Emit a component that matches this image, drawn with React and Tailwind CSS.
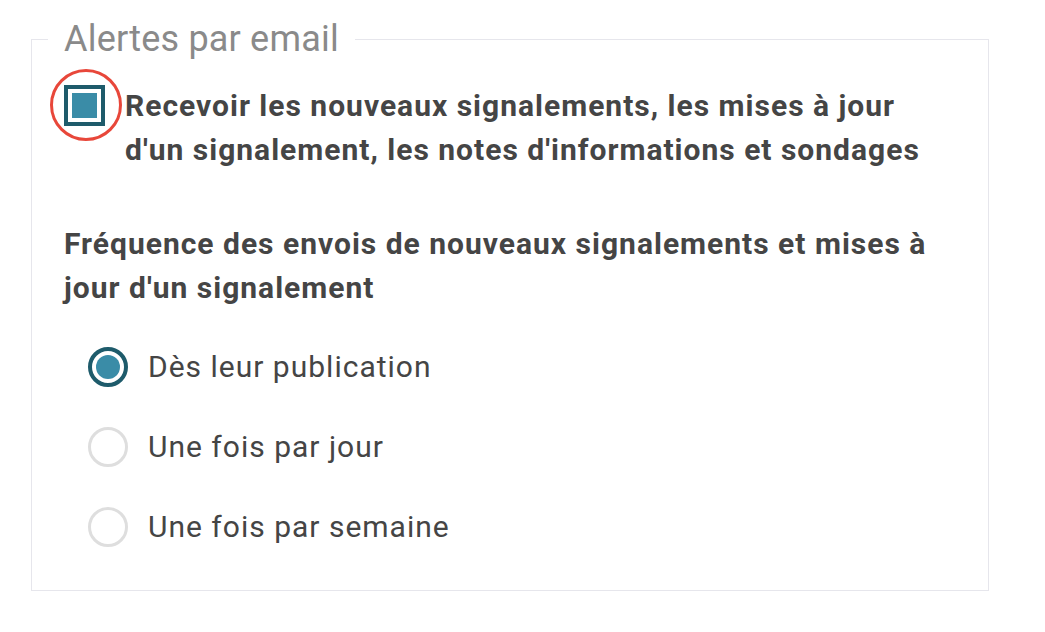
import { useState } from 'react';

const FREQUENCIES = [
  { id: 'immediate', label: 'Dès leur publication' },
  { id: 'daily', label: 'Une fois par jour' },
  { id: 'weekly', label: 'Une fois par semaine' },
];

// Square checkbox: dark frame, white gap, teal fill when checked
function Checkbox({ checked, onChange }) {
  return (
    <button
      type="button"
      onClick={() => onChange(!checked)}
      className="relative shrink-0 w-[41px] h-[41px] mt-[1px]"
    >
      {/* red highlight ring */}
      <span className="absolute left-[-14px] top-[-16px] w-[72px] h-[72px] rounded-full border-[3px] border-[#e8473a]" />
      <span
        className={
          checked
            ? 'flex w-full h-full border-[4px] border-[#1e5b6b] bg-white p-[4px]'
            : 'flex w-full h-full border-[3px] border-[#dcdcdc] bg-white p-[4px]'
        }
      >
        {checked && <span className="block w-full h-full bg-[#3a8ca7]" />}
      </span>
    </button>
  );
}

function Radio({ selected }) {
  return selected ? (
    <span className="flex shrink-0 w-[40px] h-[40px] rounded-full border-[4px] border-[#1e5b6b] bg-white p-[4px]">
      <span className="block w-full h-full rounded-full bg-[#3a8ca7]" />
    </span>
  ) : (
    <span className="block shrink-0 w-[40px] h-[40px] rounded-full border-[3px] border-[#dedede] bg-white" />
  );
}

export default function App() {
  const [subscribed, setSubscribed] = useState(true);
  const [frequency, setFrequency] = useState('immediate');

  return (
    <div className="min-h-screen bg-white pl-[31px] pt-[18px] font-['Roboto',_sans-serif] text-[#454545]">
      <fieldset className="w-[958px] h-[573px] border border-[#e6e6ec] pl-4 pr-4 pt-[23px]">
        <legend className="px-4 text-[36px] leading-[43px] tracking-[0.2px] text-[#8a8a8a]">
          Alertes par email
        </legend>

        <div className="pl-4">
          <label className="flex items-start gap-[20px] cursor-pointer">
            <Checkbox checked={subscribed} onChange={setSubscribed} />
            <span className="text-[30px] leading-[44px] tracking-[1px] font-bold">
              Recevoir les nouveaux signalements, les mises à jour
              <br />
              d'un signalement, les notes d'informations et sondages
            </span>
          </label>

          <p className="mt-[50px] text-[30px] leading-[44px] tracking-[1px] font-bold">
            Fréquence des envois de nouveaux signalements et mises à
            <br />
            jour d'un signalement
          </p>

          <div className="mt-[35px] pl-[24px] flex flex-col gap-[36px]">
            {FREQUENCIES.map(f => (
              <label
                key={f.id}
                onClick={() => setFrequency(f.id)}
                className="flex items-center gap-[20px] cursor-pointer"
              >
                <Radio selected={frequency === f.id} />
                <span className="text-[30px] leading-[44px] tracking-[1px]">{f.label}</span>
              </label>
            ))}
          </div>
        </div>
      </fieldset>
    </div>
  );
}
